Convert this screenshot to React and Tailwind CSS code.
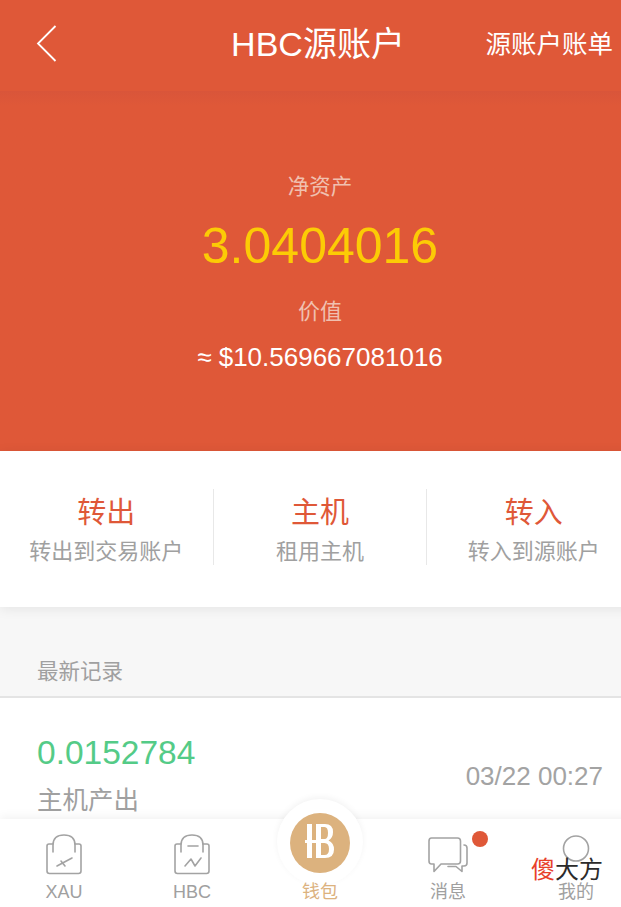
const sans = "font-['Liberation_Sans','Noto_Sans_CJK_SC',sans-serif]";

function Bag({ children }) {
  return (
    <svg width="38" height="42" viewBox="0 0 38 42" fill="none" stroke="#a3a3a3" strokeWidth="1.6" strokeLinecap="round" strokeLinejoin="round">
      <path d="M8 10 H4 Q2 10 2 12 V37 Q2 39.5 4.5 39.5 H33.5 Q36 39.5 36 37 V12 Q36 10 34 10 H30" />
      <path d="M8 18 V11 Q8 1 19 1 Q30 1 30 11 V18" />
      <path d="M8 10 H30" strokeOpacity="0" />
      {children}
    </svg>
  );
}

function Action({ title, sub, border }) {
  return (
    <div className={`flex-1 flex flex-col items-center h-[76px] pt-[4px] ${border ? "border-l border-[#e8e8e8]" : ""}`}>
      <div className="text-[29px] leading-[40px] text-[#df5838]">{title}</div>
      <div className="mt-[3px] text-[22px] leading-[32px] whitespace-nowrap text-[#a0a0a0]">{sub}</div>
    </div>
  );
}

function Tab({ icon, label, color = "text-[#a0a0a0]" }) {
  return (
    <div className="flex-1 flex flex-col items-center">
      <div className="h-[57px] flex items-end">{icon}</div>
      <div className={`relative z-10 text-[18px] leading-[24px] mt-[4px] ${color}`}>{label}</div>
    </div>
  );
}

export default function App() {
  return (
    <div className="w-[621px] h-[907px] overflow-hidden relative">
      <div className={`w-[640px] h-[907px] relative bg-[#f7f7f7] ${sans}`}>
        <header className="h-[91px] bg-[#df5838] relative flex items-center justify-center pr-[4px] text-white">
          <svg className="absolute left-[36px] top-[25px]" width="22" height="37" viewBox="0 0 22 37" fill="none" stroke="white" strokeWidth="1.8">
            <path d="M19.5 1 L2 18.5 L19.5 36" />
          </svg>
          <div className="text-[34px] leading-[40px] -mt-[3px]">HBC源账户</div>
          <div className="absolute right-[27px] top-[26px] text-[25.5px] leading-[36px]">源账户账单</div>
        </header>
        <section className="h-[360px] bg-gradient-to-b from-[#d9553a] to-[#df5838] to-[4%] flex flex-col items-center">
          <div className="mt-[81px] text-[21.5px] leading-[30px] text-[#f0c0b0]">净资产</div>
          <div className="mt-[15px] text-[50px] leading-[58px] text-[#fccb05]">3.0404016</div>
          <div className="mt-[22px] text-[22px] leading-[30px] text-[#f0c0b0]">价值</div>
          <div className="mt-[13px] text-[26px] leading-[34px] text-white">≈ $10.569667081016</div>
        </section>
        <section className="h-[156px] bg-white flex items-center shadow-[0_2px_12px_rgba(0,0,0,0.08)] relative pb-[4px]">
          <Action title="转出" sub="转出到交易账户" />
          <Action title="主机" sub="租用主机" border />
          <Action title="转入" sub="转入到源账户" border />
        </section>
        <div className="h-[91px] pl-[37px] pt-[49px] border-b-2 border-[#e4e4e4]">
          <div className="text-[21.5px] leading-[32px] text-[#a0a0a0]">最新记录</div>
        </div>
        <section className="bg-white h-[200px] pl-[37px] pr-[37px] flex justify-between">
          <div>
            <div className="mt-[34px] text-[33.5px] leading-[42px] text-[#54cb87]">0.0152784</div>
            <div className="mt-[8px] text-[25.5px] leading-[36px] text-[#a0a0a0]">主机产出</div>
          </div>
          <div className="mt-[60px] text-[26px] leading-[36px] text-[#a3a3a3]">03/22 00:27</div>
        </section>

        <nav className="absolute left-0 right-0 bottom-0 h-[88px] bg-white flex shadow-[0_-2px_10px_rgba(0,0,0,0.06)]">
          <Tab label="XAU" icon={
            <Bag>
              <path d="M12 32 L27 24 M16 27 L20 32" />
            </Bag>
          } />
          <Tab label="HBC" icon={
            <Bag>
              <path d="M15 12 H25" />
              <path d="M12 32 L18 25 L22 32 L28 24" />
            </Bag>
          } />
          <div className="flex-1 flex flex-col items-center">
            <div className="h-[57px]" />
            <div className="relative z-10 text-[18px] leading-[24px] mt-[4px] text-[#dcb27e]">钱包</div>
          </div>
          <Tab label="消息" icon={
            <div className="mb-[3px]">
              <svg className="block" width="40" height="36" viewBox="0 0 40 36" fill="none" stroke="#a3a3a3" strokeWidth="1.6" strokeLinejoin="round" strokeLinecap="round">
                <path d="M3.5 1 H29.5 Q32.5 1 32.5 4 V24 Q32.5 27 29.5 27 H13 L6 34.5 V27 H3.5 Q1 27 1 24 V4 Q1 1 3.5 1 Z" />
                <path d="M36 8 Q39 8 39 11 V26 Q39 29 36 29 H34 V34.5 L28 29.5 H20" />
              </svg>
            </div>
          } />
          <Tab label="我的" icon={
            <svg width="30" height="36" viewBox="0 0 30 36" fill="none" stroke="#a3a3a3" strokeWidth="1.6" className="mb-[5px]">
              <circle cx="15" cy="13.5" r="12.5" />
            </svg>
          } />
        </nav>
        <div className="absolute left-[277px] top-[799px] w-[86px] h-[86px] rounded-full bg-white shadow-[0_-2px_6px_rgba(0,0,0,0.05)] flex items-start justify-center pt-[14px]">
          <div className="w-[60px] h-[60px] rounded-full bg-[#dcb27e]">
            <svg className="block" width="60" height="60" viewBox="0 0 60 60" fill="white">
              <path d="M17 11 H22 V45 H17 Z" />
              <path d="M15 27 H27 V30 H15 Z" />
              <path fillRule="evenodd" d="M26 11 H35 Q43 11 43 19 Q43 25 38.5 27.5 Q44 30 44 36.5 Q44 45 35 45 H26 Z M31 14 V26 H34.5 Q38 26 38 20 Q38 14 34.5 14 Z M31 30 V42 H34.5 Q39 42 39 36 Q39 30 34.5 30 Z" />
            </svg>
          </div>
        </div>
        <div className="absolute left-[472px] top-[831px] w-4 h-4 rounded-full bg-[#df5838]" />
        <div className="absolute left-[531px] top-[854px] text-[24px] leading-[28px] font-['Noto_Sans_CJK_SC',sans-serif]">
          <span className="text-[#e8402a]">傻</span><span className="text-[#2b2b2b]">大方</span>
        </div>
      </div>
    </div>
  );
}
